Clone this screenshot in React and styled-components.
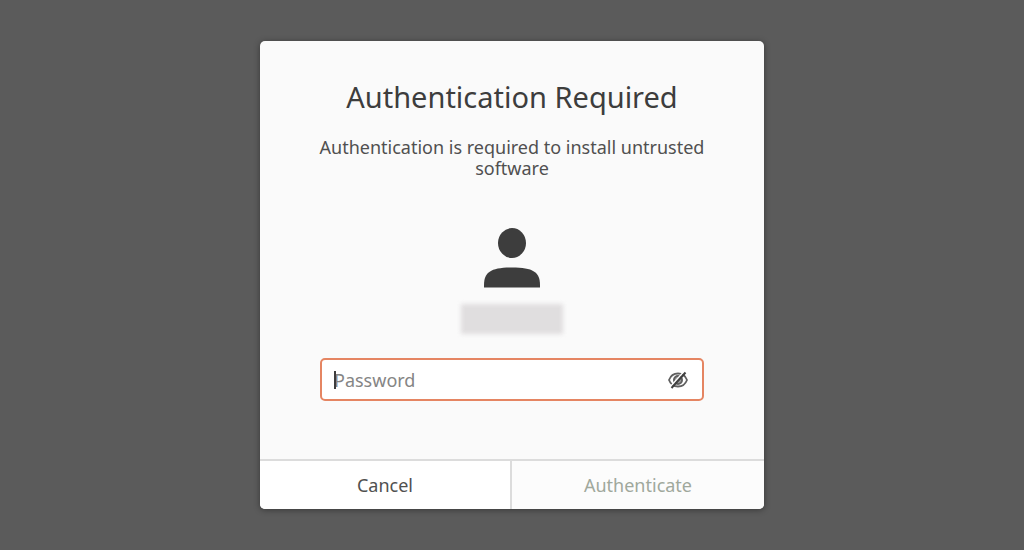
import React, { useState } from "react";
import styled, { createGlobalStyle } from "styled-components";

const App = () => {
  const [password, setPassword] = useState("");
  const [visible, setVisible] = useState(false);

  return (
    <>
      <GlobalStyle />
      <Backdrop>
        <Dialog
          role="dialog"
          aria-labelledby="dialog-title"
          aria-describedby="dialog-message"
          onSubmit={(e) => e.preventDefault()}
        >
          <Content>
            <Title id="dialog-title">Authentication Required</Title>
            <Message id="dialog-message">
              Authentication is required to install untrusted software
            </Message>
            <Avatar viewBox="0 0 56 60" aria-hidden="true">
              <ellipse cx="28" cy="15" rx="14" ry="15" />
              <path d="M0 59.5V57C0 44 7 39.500 28 39.500S56 44 56 57V59.500Z" />
            </Avatar>
            <UserName />
            <Field>
              <Input
                type={visible ? "text" : "password"}
                placeholder="Password"
                aria-label="Password"
                value={password}
                onChange={(e) => setPassword(e.target.value)}
              />
              {!password && <Caret />}
              <PeekButton
                type="button"
                aria-label="Show password"
                onClick={() => setVisible(!visible)}
              >
                <EyeOff />
              </PeekButton>
            </Field>
          </Content>
          <Actions>
            <Button type="button">Cancel</Button>
            <Button type="submit" disabled={!password}>
              Authenticate
            </Button>
          </Actions>
        </Dialog>
      </Backdrop>
    </>
  );
};

const EyeOff = () => (
  <svg width="20" height="18" viewBox="0 0 20 18" fill="none" aria-hidden="true">
    <path
      d="M1 9C2.500 5 6 2.500 10 2.500S17.500 5 19 9C17.500 13 14 15.500 10 15.500S2.500 13 1 9Z"
      stroke="#606060"
      strokeWidth="1.8"
    />
    <circle cx="10" cy="9" r="4" fill="#a0a0a0" stroke="#606060" strokeWidth="2" />
    <path d="M2.500 15.500L16 0.500" stroke="#fefefe" strokeWidth="1.5" />
    <path d="M3.500 17L17.500 1.500" stroke="#404040" strokeWidth="2" />
  </svg>
);

export default App;

const GlobalStyle = createGlobalStyle`
  * {
    box-sizing: border-box;
  }

  body {
    margin: 0;
    background: #5b5b5b;
    font-family: "Noto Sans", "Open Sans", sans-serif;
    color: #3d3d3d;
  }
`;

const Backdrop = styled.main`
  min-height: 100vh;
  display: flex;
  align-items: center;
  justify-content: center;
  padding: 16px;
`;

const Dialog = styled.form`
  width: 100%;
  max-width: 504px;
  overflow: hidden;
  border-radius: 5px;
  background: #fafafa;
  box-shadow: 0 1px 6px rgba(0, 0, 0, 0.4);
`;

const Content = styled.div`
  display: flex;
  flex-direction: column;
  align-items: center;
  padding: 36px 52px 58px;
`;

const Title = styled.h1`
  margin: 0 0 20px;
  font-size: 29px;
  font-weight: 400;
  line-height: 40px;
  text-align: center;
`;

const Message = styled.p`
  margin: 0 0 49px;
  font-size: 18px;
  line-height: 21px;
  color: #505050;
  text-align: center;
`;

const Avatar = styled.svg`
  width: 56px;
  height: 60px;
  margin-bottom: 16px;
  fill: #3d3d3d;
`;

/* account name, kept unreadable */
const UserName = styled.div`
  width: 102px;
  height: 30px;
  margin-bottom: 24px;
  background: #e0dedf;
  filter: blur(2px);
`;

const Field = styled.div`
  position: relative;
  display: flex;
  align-items: center;
  width: 100%;
  max-width: 384px;
  height: 43px;
  padding: 0 14px 0 12px;
  border: 2px solid #e58562;
  border-radius: 5px;
  background: #ffffff;
`;

const Input = styled.input`
  flex: 1;
  min-width: 0;
  padding: 0;
  border: none;
  outline: none;
  background: transparent;
  font: inherit;
  font-size: 18px;
  color: #3d3d3d;

  &::placeholder {
    color: #858585;
    opacity: 1;
  }
`;

const Caret = styled.span`
  position: absolute;
  left: 12px;
  width: 2px;
  height: 18px;
  background: #3d3d3d;
`;

const PeekButton = styled.button`
  display: flex;
  padding: 0;
  border: none;
  background: none;
  cursor: pointer;
`;

const Actions = styled.div`
  display: grid;
  grid-template-columns: 1fr 1fr;
  border-top: 2px solid #dcdcdc;
`;

const Button = styled.button`
  height: 48px;
  padding: 0;
  border: none;
  background: #ffffff;
  font: inherit;
  font-size: 18px;
  color: #505050;
  cursor: pointer;

  &:first-child {
    border-right: 2px solid #dcdcdc;
  }

  &:disabled {
    background: #fcfcfc;
    color: #a0a89c;
    cursor: default;
  }
`;
